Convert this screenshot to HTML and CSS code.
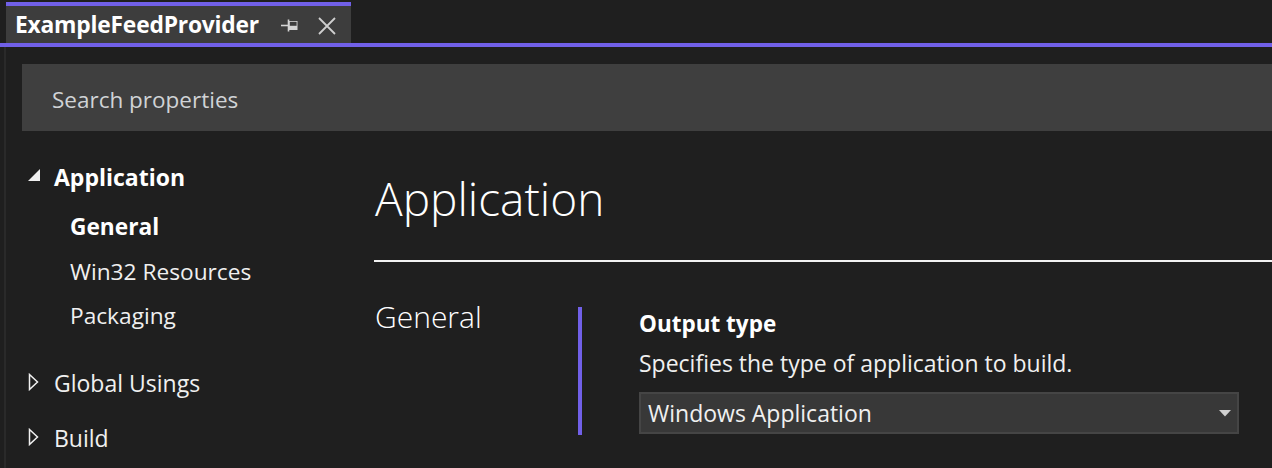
FILE: index.html
```html
<!DOCTYPE html>
<html lang="en">
<head>
<meta charset="utf-8">
<title>ExampleFeedProvider</title>
<link rel="stylesheet" href="styles.css">
</head>
<body>
<div class="window">
  <div class="tabstrip">
    <div class="tab">
      <span class="tab-title">ExampleFeedProvider</span>
      <svg class="pin" width="17" height="14" viewBox="0 0 17 14">
        <path d="M0 6.5H7" stroke="#d4d4d4" stroke-width="1.6" fill="none"/>
        <path d="M7.5 0.5V12.5" stroke="#d4d4d4" stroke-width="1.6" fill="none"/>
        <rect x="8" y="2" width="8.5" height="9" fill="#d4d4d4"/>
        <rect x="8.8" y="2.8" width="6.8" height="4" fill="#3d3d3d"/>
      </svg>
      <svg class="close" width="20" height="20" viewBox="0 0 20 20">
        <path d="M2 2L18 18M18 2L2 18" stroke="#cfcfcf" stroke-width="1.8" fill="none"/>
      </svg>
    </div>
  </div>
  <div class="tabline"></div>
  <div class="frame">
    <div class="search">Search properties</div>
    <div class="content">
      <nav class="sidebar">
        <div class="group open">
          <svg class="tri" width="14" height="14" viewBox="0 0 14 14"><path d="M13 1V13H1Z" fill="#f0f0f0"/></svg>
          <span class="group-title">Application</span>
        </div>
        <div class="item active">General</div>
        <div class="item">Win32 Resources</div>
        <div class="item">Packaging</div>
        <div class="group closed g2">
          <svg class="tri" width="12" height="18" viewBox="0 0 12 18"><path d="M1.5 1.5L9.5 9L1.5 16.5Z" fill="none" stroke="#f0f0f0" stroke-width="1.5" stroke-linejoin="miter"/></svg>
          <span class="group-title light">Global Usings</span>
        </div>
        <div class="group closed g3">
          <svg class="tri" width="12" height="18" viewBox="0 0 12 18"><path d="M1.5 1.5L9.5 9L1.5 16.5Z" fill="none" stroke="#f0f0f0" stroke-width="1.5" stroke-linejoin="miter"/></svg>
          <span class="group-title light">Build</span>
        </div>
      </nav>
      <main class="main">
        <h1 class="page-title">Application</h1>
        <div class="rule"></div>
        <section class="section">
          <h2 class="section-title">General</h2>
          <div class="bar"></div>
          <div class="props">
            <div class="prop-name">Output type</div>
            <div class="prop-desc">Specifies the type of application to build.</div>
            <div class="select">
              <span>Windows Application</span>
              <svg class="caret" width="12" height="7" viewBox="0 0 12 7"><path d="M0 0H12L6 6.5Z" fill="#d0d0d0"/></svg>
            </div>
          </div>
        </section>
      </main>
    </div>
  </div>
</div>
</body>
</html>
```
FILE: styles.css
```css
* { box-sizing: border-box; }
html, body {
  margin: 0;
  padding: 0;
  background: #1f1f1f;
  width: 1272px;
  height: 468px;
  overflow: hidden;
}
body {
  font-family: "Open Sans", "Noto Sans", sans-serif;
  color: #f0f0f0;
}
.window {
  width: 1272px;
  height: 468px;
  display: flex;
  flex-direction: column;
}
.tabstrip {
  height: 43px;
  padding: 2px 0 0 6px;
  display: flex;
}
.tab {
  width: 345px;
  height: 41px;
  background: #3d3d3d;
  border-top: 4px solid #7160e8;
  display: flex;
  align-items: center;
  padding-left: 9px;
}
.tab-title {
  font-weight: 700;
  font-size: 22.8px;
  color: #ffffff;
  letter-spacing: -0.2px;
}
.pin {
  margin-left: 22px;
  margin-top: 3px;
}
.close {
  margin-left: 19px;
  margin-top: 3px;
}
.tabline {
  height: 4px;
  background: #7160e8;
}
.frame {
  flex: 1;
  margin-left: 4px;
  border-left: 2px solid #2a2a2a;
  padding-top: 17px;
  display: flex;
  flex-direction: column;
}
.search {
  margin-left: 16px;
  height: 67px;
  background: #3f3f3f;
  display: flex;
  align-items: center;
  padding: 3px 0 0 30px;
  font-size: 22.5px;
  color: #d0d3d6;
}
.content {
  flex: 1;
  display: flex;
}
.sidebar {
  width: 369px;
  padding-top: 24px;
}
.group {
  display: flex;
  align-items: center;
  height: 44px;
  font-size: 23px;
}
.group .tri {
  margin-left: 21px;
}
.group.open .tri { margin-top: -4px; }
.group.closed .tri { margin-left: 22px; margin-top: -3px; width: 12px; }
.group-title {
  margin-left: 13px;
  font-weight: 700;
  color: #ffffff;
}
.group.closed .group-title { margin-left: 14px; }
.group-title.light {
  font-weight: 400;
  color: #f0f0f0;
}
.item {
  height: 44px;
  line-height: 44px;
  padding-left: 64px;
  font-size: 22.7px;
  color: #f0f0f0;
}
.item.active {
  margin-top: 6px;
  height: 45px;
  font-weight: 700;
  color: #ffffff;
}
.g2 { margin-top: 23px; }
.g3 { margin-top: 11px; }
.main {
  flex: 1;
  padding-top: 37px;
}
.page-title {
  margin: 0;
  font-weight: 350;
  font-size: 46px;
  line-height: 60px;
  color: #ffffff;
}
.rule {
  margin-top: 32px;
  height: 2px;
  background: #f2f2f2;
  margin-left: -1px;
}
.section {
  display: flex;
  align-items: flex-start;
  margin-top: 35px;
}
.section-title {
  margin: 0;
  width: 203px;
  flex: none;
  font-weight: 350;
  font-size: 30px;
  line-height: 40px;
  color: #ffffff;
}
.bar {
  flex: none;
  margin-top: 10px;
  width: 4px;
  height: 128px;
  background: #7160e8;
}
.props {
  margin-left: 57px;
  width: 600px;
  padding-top: 12px;
}
.prop-name {
  font-weight: 700;
  font-size: 22.5px;
  line-height: 30px;
  color: #ffffff;
}
.prop-desc {
  font-size: 23px;
  line-height: 30px;
  margin-top: 9px;
  color: #f0f0f0;
}
.select {
  margin-top: 14px;
  height: 42px;
  background: #383838;
  border: 2px solid #454545;
  display: flex;
  align-items: center;
  justify-content: space-between;
  padding: 0 6px 0 7px;
  font-size: 23px;
  color: #f0f0f0;
}
```
